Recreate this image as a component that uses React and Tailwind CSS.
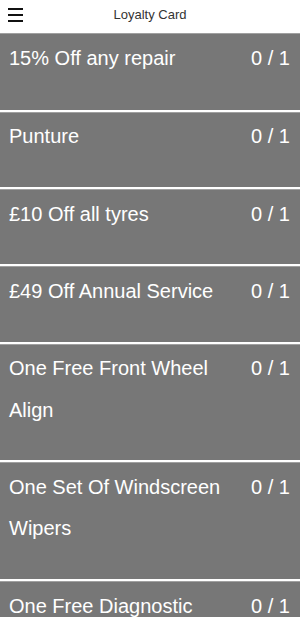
import React from "react";

const items = [
  "15% Off any repair",
  "Punture",
  "£10 Off all tyres",
  "£49 Off Annual Service",
  "One Free Front Wheel Align",
  "One Set Of Windscreen Wipers",
  "One Free Diagnostic",
];

export default function App() {
  return (
    <div className="w-[300px] h-[617px] overflow-hidden bg-white" style={{ fontFamily: '"Liberation Sans", Arial, sans-serif' }}>
      <div className="relative h-[33px] flex justify-center bg-white">
        <div className="absolute left-[8px] top-[8px] flex flex-col gap-[4px]">
          <div className="w-[15px] h-[2px] bg-[#111]" />
          <div className="w-[15px] h-[2px] bg-[#111]" />
          <div className="w-[15px] h-[2px] bg-[#111]" />
        </div>
        <span className="text-[13px] leading-[15px] pt-[7px] text-[#333]">Loyalty Card</span>
      </div>
      <div className="flex flex-col">
        {items.map((t) => (
          <div key={t} className="bg-[#777777] border-t border-[#a0a0a0] border-b-2 border-b-white first:pb-[1.5px]">
            <div className="flex justify-between pl-[9px] pr-[10px] pt-[3.5px] pb-[29.5px] text-white text-[20px] leading-[41.33px]">
              <span className="max-w-[220px]">{t}</span>
              <span className="shrink-0">0 / 1</span>
            </div>
          </div>
        ))}
      </div>
    </div>
  );
}
